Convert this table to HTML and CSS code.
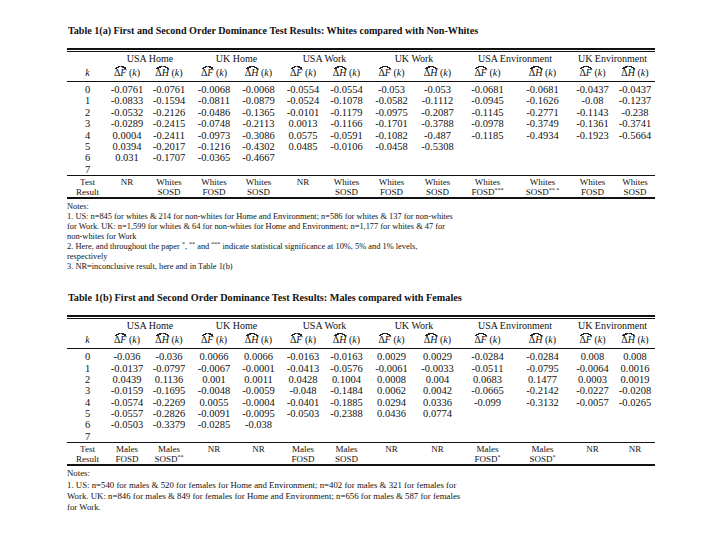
FILE: index.html
```html
<!DOCTYPE html>
<html>
<head>
<meta charset="utf-8">
<link rel="stylesheet" href="styles.css">
</head>
<body>
<div class="page">
  <section class="block">
    <h2 class="title">Table 1(a) First and Second Order Dominance Test Results: Whites compared with Non-Whites</h2>
    <div class="tbl">
      <div class="row grp">
        <span class="g1">USA Home</span><span class="g2">UK Home</span><span class="g3">USA Work</span><span class="g4">UK Work</span><span class="g5">USA Environment</span><span class="g6">UK Environment</span>
      </div>
      <div class="row hdr">
        <span><i>k</i></span>
        <span><span class="hat">Δ<i>F</i></span> (<i>k</i>)</span><span><span class="hat">Δ<i>H</i></span> (<i>k</i>)</span>
        <span><span class="hat">Δ<i>F</i></span> (<i>k</i>)</span><span><span class="hat">Δ<i>H</i></span> (<i>k</i>)</span>
        <span><span class="hat">Δ<i>F</i></span> (<i>k</i>)</span><span><span class="hat">Δ<i>H</i></span> (<i>k</i>)</span>
        <span><span class="hat">Δ<i>F</i></span> (<i>k</i>)</span><span><span class="hat">Δ<i>H</i></span> (<i>k</i>)</span>
        <span><span class="hat">Δ<i>F</i></span> (<i>k</i>)</span><span><span class="hat">Δ<i>H</i></span> (<i>k</i>)</span>
        <span><span class="hat">Δ<i>F</i></span> (<i>k</i>)</span><span><span class="hat">Δ<i>H</i></span> (<i>k</i>)</span>
      </div>
      <div class="body">
        <div class="row"><span>0</span><span>-0.0761</span><span>-0.0761</span><span>-0.0068</span><span>-0.0068</span><span>-0.0554</span><span>-0.0554</span><span>-0.053</span><span>-0.053</span><span>-0.0681</span><span>-0.0681</span><span>-0.0437</span><span>-0.0437</span></div>
        <div class="row"><span>1</span><span>-0.0833</span><span>-0.1594</span><span>-0.0811</span><span>-0.0879</span><span>-0.0524</span><span>-0.1078</span><span>-0.0582</span><span>-0.1112</span><span>-0.0945</span><span>-0.1626</span><span>-0.08</span><span>-0.1237</span></div>
        <div class="row"><span>2</span><span>-0.0532</span><span>-0.2126</span><span>-0.0486</span><span>-0.1365</span><span>-0.0101</span><span>-0.1179</span><span>-0.0975</span><span>-0.2087</span><span>-0.1145</span><span>-0.2771</span><span>-0.1143</span><span>-0.238</span></div>
        <div class="row"><span>3</span><span>-0.0289</span><span>-0.2415</span><span>-0.0748</span><span>-0.2113</span><span>0.0013</span><span>-0.1166</span><span>-0.1701</span><span>-0.3788</span><span>-0.0978</span><span>-0.3749</span><span>-0.1361</span><span>-0.3741</span></div>
        <div class="row"><span>4</span><span>0.0004</span><span>-0.2411</span><span>-0.0973</span><span>-0.3086</span><span>0.0575</span><span>-0.0591</span><span>-0.1082</span><span>-0.487</span><span>-0.1185</span><span>-0.4934</span><span>-0.1923</span><span>-0.5664</span></div>
        <div class="row"><span>5</span><span>0.0394</span><span>-0.2017</span><span>-0.1216</span><span>-0.4302</span><span>0.0485</span><span>-0.0106</span><span>-0.0458</span><span>-0.5308</span><span></span><span></span><span></span><span></span></div>
        <div class="row"><span>6</span><span>0.031</span><span>-0.1707</span><span>-0.0365</span><span>-0.4667</span><span></span><span></span><span></span><span></span><span></span><span></span><span></span><span></span></div>
        <div class="row"><span>7</span><span></span><span></span><span></span><span></span><span></span><span></span><span></span><span></span><span></span><span></span><span></span><span></span></div>
      </div>
      <div class="row test">
        <span>Test<br>Result</span>
        <span>NR</span>
        <span>Whites<br>SOSD</span>
        <span>Whites<br>FOSD</span>
        <span>Whites<br>SOSD</span>
        <span>NR</span>
        <span>Whites<br>SOSD</span>
        <span>Whites<br>FOSD</span>
        <span>Whites<br>SOSD</span>
        <span>Whites<br>FOSD<sup>***</sup></span>
        <span>Whites<br>SOSD<sup>** *</sup></span>
        <span>Whites<br>FOSD</span>
        <span>Whites<br>SOSD</span>
      </div>
    </div>
    <div class="notes">
      <p>Notes:</p>
      <p>1. US: n=845 for whites &amp; 214 for non-whites for Home and Environment; n=586 for whites &amp; 137 for non-whites</p>
      <p>for Work. UK: n=1,599 for whites &amp; 64 for non-whites for Home and Environment; n=1,177 for whites &amp; 47 for</p>
      <p>non-whites for Work</p>
      <p>2. Here, and throughout the paper <sup>*</sup>, <sup>**</sup> and <sup>***</sup> indicate statistical significance at 10%, 5% and 1% levels,</p>
      <p>respectively</p>
      <p>3. NR=inconclusive result, here and in Table 1(b)</p>
    </div>
  </section>

  <section class="block second">
    <h2 class="title title2">Table 1(b) First and Second Order Dominance Test Results: Males compared with Females</h2>
    <div class="tbl">
      <div class="row grp">
        <span class="g1">USA Home</span><span class="g2">UK Home</span><span class="g3">USA Work</span><span class="g4">UK Work</span><span class="g5">USA Environment</span><span class="g6">UK Environment</span>
      </div>
      <div class="row hdr">
        <span><i>k</i></span>
        <span><span class="hat">Δ<i>F</i></span> (<i>k</i>)</span><span><span class="hat">Δ<i>H</i></span> (<i>k</i>)</span>
        <span><span class="hat">Δ<i>F</i></span> (<i>k</i>)</span><span><span class="hat">Δ<i>H</i></span> (<i>k</i>)</span>
        <span><span class="hat">Δ<i>F</i></span> (<i>k</i>)</span><span><span class="hat">Δ<i>H</i></span> (<i>k</i>)</span>
        <span><span class="hat">Δ<i>F</i></span> (<i>k</i>)</span><span><span class="hat">Δ<i>H</i></span> (<i>k</i>)</span>
        <span><span class="hat">Δ<i>F</i></span> (<i>k</i>)</span><span><span class="hat">Δ<i>H</i></span> (<i>k</i>)</span>
        <span><span class="hat">Δ<i>F</i></span> (<i>k</i>)</span><span><span class="hat">Δ<i>H</i></span> (<i>k</i>)</span>
      </div>
      <div class="body">
        <div class="row"><span>0</span><span>-0.036</span><span>-0.036</span><span>0.0066</span><span>0.0066</span><span>-0.0163</span><span>-0.0163</span><span>0.0029</span><span>0.0029</span><span>-0.0284</span><span>-0.0284</span><span>0.008</span><span>0.008</span></div>
        <div class="row"><span>1</span><span>-0.0137</span><span>-0.0797</span><span>-0.0067</span><span>-0.0001</span><span>-0.0413</span><span>-0.0576</span><span>-0.0061</span><span>-0.0033</span><span>-0.0511</span><span>-0.0795</span><span>-0.0064</span><span>0.0016</span></div>
        <div class="row"><span>2</span><span>0.0439</span><span>0.1136</span><span>0.001</span><span>0.0011</span><span>0.0428</span><span>0.1004</span><span>0.0008</span><span>0.004</span><span>0.0683</span><span>0.1477</span><span>0.0003</span><span>0.0019</span></div>
        <div class="row"><span>3</span><span>-0.0159</span><span>-0.1695</span><span>-0.0048</span><span>-0.0059</span><span>-0.048</span><span>-0.1484</span><span>0.0062</span><span>0.0042</span><span>-0.0665</span><span>-0.2142</span><span>-0.0227</span><span>-0.0208</span></div>
        <div class="row"><span>4</span><span>-0.0574</span><span>-0.2269</span><span>0.0055</span><span>-0.0004</span><span>-0.0401</span><span>-0.1885</span><span>0.0294</span><span>0.0336</span><span>-0.099</span><span>-0.3132</span><span>-0.0057</span><span>-0.0265</span></div>
        <div class="row"><span>5</span><span>-0.0557</span><span>-0.2826</span><span>-0.0091</span><span>-0.0095</span><span>-0.0503</span><span>-0.2388</span><span>0.0436</span><span>0.0774</span><span></span><span></span><span></span><span></span></div>
        <div class="row"><span>6</span><span>-0.0503</span><span>-0.3379</span><span>-0.0285</span><span>-0.038</span><span></span><span></span><span></span><span></span><span></span><span></span><span></span><span></span></div>
        <div class="row"><span>7</span><span></span><span></span><span></span><span></span><span></span><span></span><span></span><span></span><span></span><span></span><span></span><span></span></div>
      </div>
      <div class="row test">
        <span>Test<br>Result</span>
        <span>Males<br>FOSD</span>
        <span>Males<br>SOSD<sup>**</sup></span>
        <span>NR</span>
        <span>NR</span>
        <span>Males<br>FOSD</span>
        <span>Males<br>SOSD</span>
        <span>NR</span>
        <span>NR</span>
        <span>Males<br>FOSD<sup>*</sup></span>
        <span>Males<br>SOSD<sup>*</sup></span>
        <span>NR</span>
        <span>NR</span>
      </div>
    </div>
    <div class="notes notes2">
      <p>Notes:</p>
      <p>1. US: n=540 for males &amp; 520 for females for Home and Environment; n=402 for males &amp; 321 for females for</p>
      <p>Work. UK: n=846 for males &amp; 849 for females for Home and Environment; n=656 for males &amp; 587 for females</p>
      <p>for Work.</p>
    </div>
  </section>
</div>
</body>
</html>
```

FILE: styles.css
```css
* { box-sizing: border-box; }

body {
  margin: 0;
  background: #ffffff;
  color: #111111;
  font-family: "Liberation Serif", "Times New Roman", serif;
}

.page {
  padding: 25px 0 0 67px;
  width: 655px;
}

.second {
  margin-top: 20px;
}

.title {
  margin: 0 0 11px 1px;
  font-size: 10.1px;
  font-weight: bold;
  line-height: 12px;
  white-space: nowrap;
}

.title2 {
  font-size: 10.2px;
}

.tbl {
  width: 588px;
  border-top: 2px solid #111;
  border-bottom: 2px solid #111;
}

.row {
  display: grid;
  grid-template-columns: 41px 38px 46px 44px 45px 44px 43px 47px 45px 55px 55px 45px 40px;
  text-align: center;
  white-space: nowrap;
}

.grp {
  margin-top: 1px;
  border-top: 1px solid #111;
  height: 13px;
  font-size: 10px;
  line-height: 13px;
}

.g1 { grid-column: 2 / span 2; }
.g2 { grid-column: 4 / span 2; }
.g3 { grid-column: 6 / span 2; }
.g4 { grid-column: 8 / span 2; }
.g5 { grid-column: 10 / span 2; }
.g6 { grid-column: 12 / span 2; }

.hdr {
  height: 18px;
  font-size: 10px;
  line-height: 18px;
  border-bottom: 1px solid #111;
}

.hdr i { font-style: italic; }

.hat {
  position: relative;
  display: inline-block;
}

.hat::before {
  content: "";
  position: absolute;
  left: 1px;
  right: 0;
  top: 2px;
  height: 3px;
  background:
    linear-gradient(to top left, transparent 38%, #222 38%, #222 66%, transparent 66%) left top / 50% 100% no-repeat,
    linear-gradient(to top right, transparent 38%, #222 38%, #222 66%, transparent 66%) right top / 50% 100% no-repeat;
}

.body {
  padding-top: 2px;
  border-bottom: 1px solid #111;
}

.body .row {
  height: 11.4px;
  font-size: 10.5px;
  line-height: 11.4px;
}

.test {
  padding-top: 1px;
  font-size: 9px;
  line-height: 10px;
  height: 21px;
}

sup {
  font-size: 6px;
  line-height: 0;
  vertical-align: 3px;
}

.notes {
  margin-top: 3px;
  font-size: 8.4px;
  line-height: 10px;
  white-space: nowrap;
}

.notes p {
  margin: 0;
  height: 10px;
}

.notes2 {
  margin-top: 2px;
  font-size: 8.8px;
  line-height: 11px;
}

.notes2 p {
  height: 11.3px;
}
```
